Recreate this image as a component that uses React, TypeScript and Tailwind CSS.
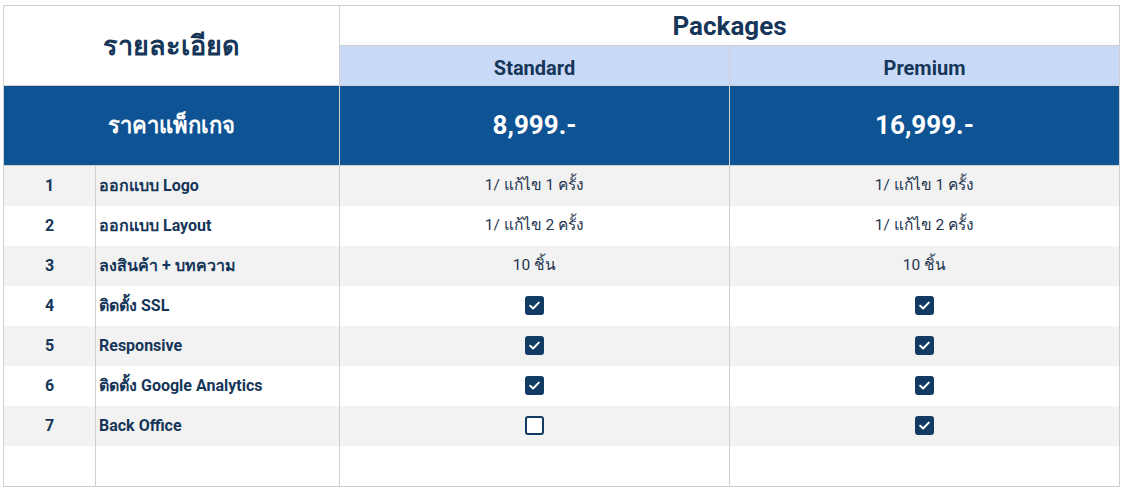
import React from 'react';

type Cell = string | boolean;

interface Row {
  no: number;
  label: string;
  standard: Cell;
  premium: Cell;
}

const rows: Row[] = [
  { no: 1, label: 'ออกแบบ Logo', standard: '1/ แก้ไข 1 ครั้ง', premium: '1/ แก้ไข 1 ครั้ง' },
  { no: 2, label: 'ออกแบบ Layout', standard: '1/ แก้ไข 2 ครั้ง', premium: '1/ แก้ไข 2 ครั้ง' },
  { no: 3, label: 'ลงสินค้า + บทความ', standard: '10 ชิ้น', premium: '10 ชิ้น' },
  { no: 4, label: 'ติดตั้ง SSL', standard: true, premium: true },
  { no: 5, label: 'Responsive', standard: true, premium: true },
  { no: 6, label: 'ติดตั้ง Google Analytics', standard: true, premium: true },
  { no: 7, label: 'Back Office', standard: false, premium: true },
];

const CheckBox = ({ checked }: { checked: boolean }) =>
  checked ? (
    <span className="inline-flex w-[19px] h-[19px] rounded-[3px] bg-[#123b63] items-center justify-center align-middle">
      <svg width="13" height="13" viewBox="0 0 13 13" fill="none">
        <path d="M2.2 6.8 L5.1 9.5 L10.8 3.6" stroke="white" strokeWidth="2" strokeLinecap="round" strokeLinejoin="round" />
      </svg>
    </span>
  ) : (
    <span className="inline-block w-[19px] h-[19px] rounded-[3px] border-2 border-[#123b63] bg-white align-middle" />
  );

const ValueCell = ({ value }: { value: Cell }) => (
  <td className="border-x border-[#cfcfcf] text-center text-[15.5px] text-[#1f3550]">
    {typeof value === 'string' ? value : <CheckBox checked={value} />}
  </td>
);

export default function App() {
  return (
    <div className="bg-white w-[1124px] h-[490px] pt-[5px] pl-[3px] font-['Roboto',sans-serif] text-[#163659]">
      <table className="table-fixed border-collapse w-[1117px]">
        <colgroup>
          <col className="w-[92px]" />
          <col className="w-[244px]" />
          <col className="w-[390px]" />
          <col className="w-[390px]" />
        </colgroup>
        <tbody>
          <tr className="h-[40px]">
            <td
              colSpan={2}
              rowSpan={2}
              className="border border-[#cfcfcf] text-center text-[27px] leading-none font-bold pt-[2px]"
            >
              รายละเอียด
            </td>
            <td colSpan={2} className="border border-[#cfcfcf] text-center text-[26px] leading-none font-bold pt-[1px]">
              Packages
            </td>
          </tr>
          <tr className="h-[40px] bg-[#c9daf8]">
            <td className="border border-[#cfcfcf] text-center text-[20px] leading-none font-bold pt-[4px]">Standard</td>
            <td className="border border-[#cfcfcf] text-center text-[20px] leading-none font-bold pt-[4px]">Premium</td>
          </tr>
          <tr className="h-[80px] bg-[#0e5394] text-white">
            <td colSpan={2} className="border border-[#cfcfcf] text-center text-[22px] font-bold">
              ราคาแพ็กเกจ
            </td>
            <td className="border border-[#cfcfcf] text-center text-[26px] font-bold">8,999.-</td>
            <td className="border border-[#cfcfcf] text-center text-[26px] font-bold">16,999.-</td>
          </tr>
          {rows.map((r) => (
            <tr key={r.no} className={`h-[40px] ${r.no % 2 === 1 ? 'bg-[#f2f2f2]' : 'bg-white'}`}>
              <td className="border-x border-[#cfcfcf] text-center text-[16px] font-bold">{r.no}</td>
              <td className="border-x border-[#cfcfcf] pl-[3px] text-[16px] font-bold">{r.label}</td>
              <ValueCell value={r.standard} />
              <ValueCell value={r.premium} />
            </tr>
          ))}
          <tr className="h-[41px]">
            <td className="border border-t-0 border-[#cfcfcf]" />
            <td className="border border-t-0 border-[#cfcfcf]" />
            <td className="border border-t-0 border-[#cfcfcf]" />
            <td className="border border-t-0 border-[#cfcfcf]" />
          </tr>
        </tbody>
      </table>
    </div>
  );
}
